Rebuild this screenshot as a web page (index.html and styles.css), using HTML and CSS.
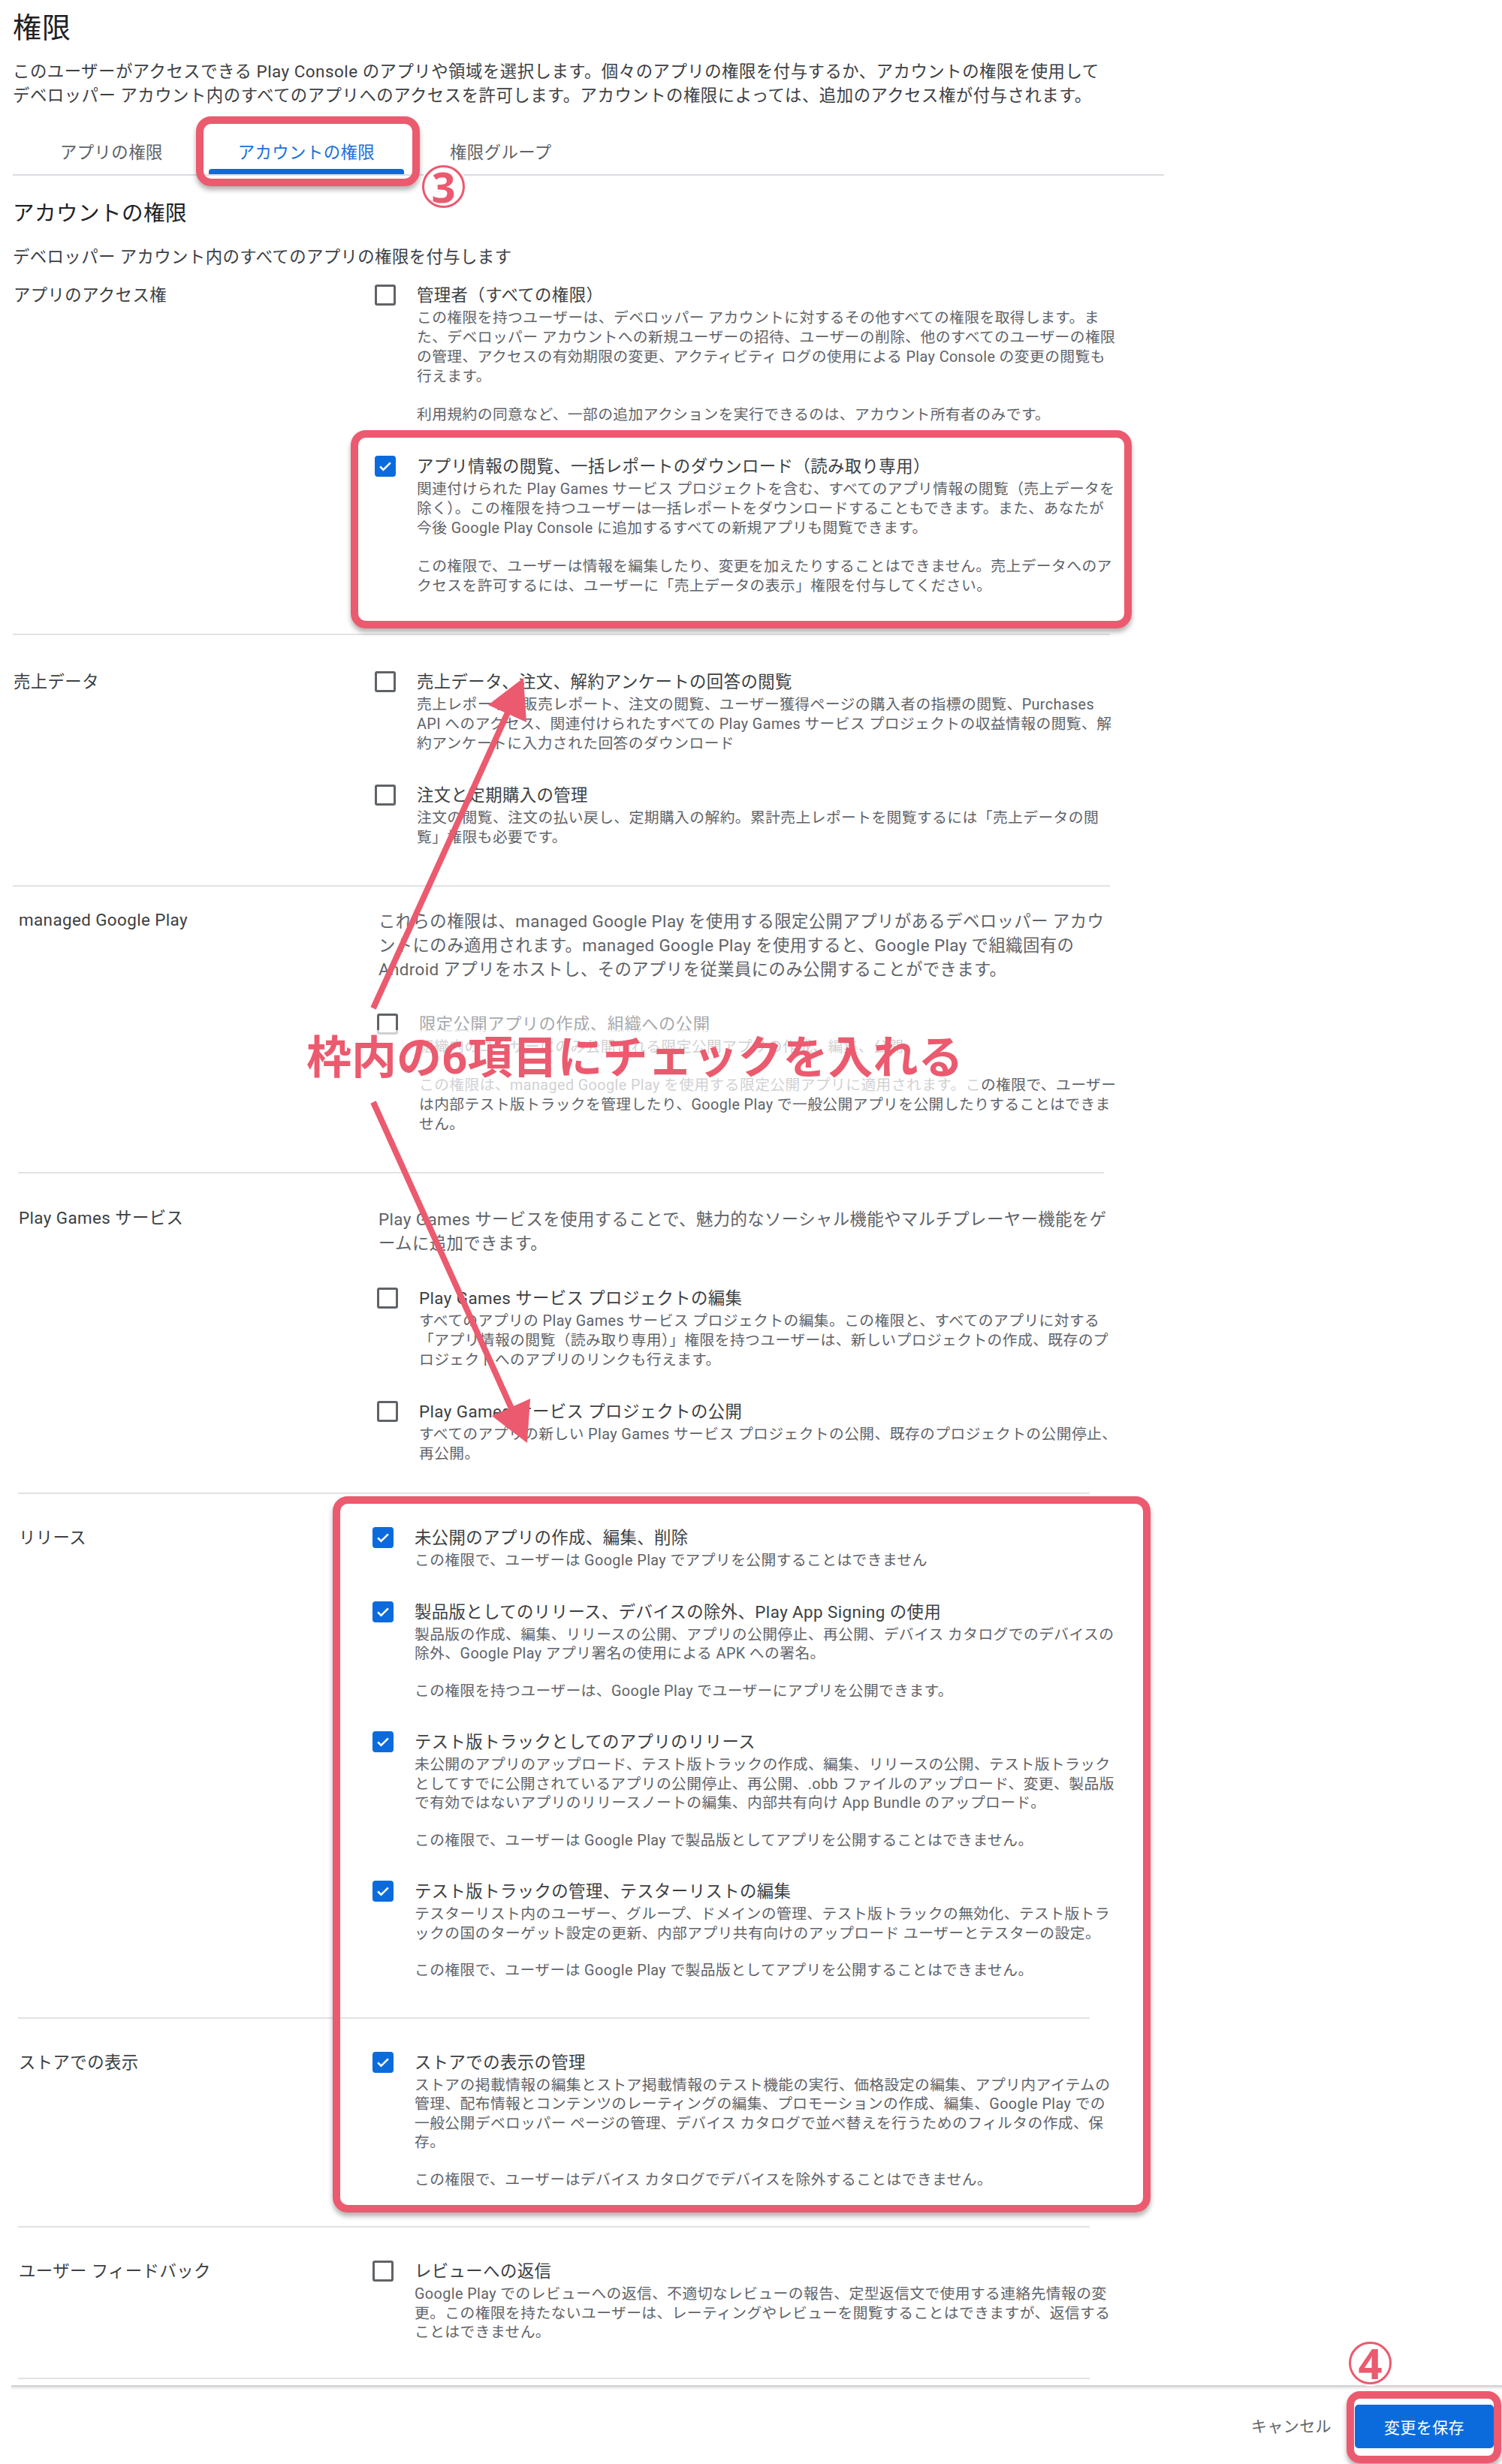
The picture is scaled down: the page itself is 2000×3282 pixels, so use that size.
FILE: index.html
```html
<!DOCTYPE html>
<html lang="ja">
<head>
<meta charset="utf-8">
<title>権限</title>
<link rel="stylesheet" href="styles.css">
</head>
<body>
<div class="page">
  <header class="head">
    <h1 class="page-title">権限</h1>
    <p class="page-desc">このユーザーがアクセスできる Play Console のアプリや領域を選択します。個々のアプリの権限を付与するか、アカウントの権限を使用して<br>デベロッパー アカウント内のすべてのアプリへのアクセスを許可します。アカウントの権限によっては、追加のアクセス権が付与されます。</p>
    <nav class="tabs">
      <div class="tab">アプリの権限</div>
      <div class="tab active">アカウントの権限</div>
      <div class="tab">権限グループ</div>
    </nav>
    <h2 class="sub-title">アカウントの権限</h2>
    <p class="sub-desc">デベロッパー アカウント内のすべてのアプリの権限を付与します</p>
  </header>

  <section class="sec sec-a sec-first">
    <div class="sec-label">アプリのアクセス権</div>
    <div class="sec-body">
      <div class="item">
        <span class="cb"></span>
        <div class="item-text">
          <div class="item-title">管理者（すべての権限）</div>
          <p class="desc">この権限を持つユーザーは、デベロッパー アカウントに対するその他すべての権限を取得します。ま<br>た、デベロッパー アカウントへの新規ユーザーの招待、ユーザーの削除、他のすべてのユーザーの権限<br>の管理、アクセスの有効期限の変更、アクティビティ ログの使用による Play Console の変更の閲覧も<br>行えます。</p>
          <p class="desc para">利用規約の同意など、一部の追加アクションを実行できるのは、アカウント所有者のみです。</p>
        </div>
      </div>
      <div class="item">
        <span class="cb on"><svg viewBox="0 0 24 24" width="22" height="22"><path d="M4.5 12.5l4.7 4.7L19.5 7" fill="none" stroke="#fff" stroke-width="2.8"/></svg></span>
        <div class="item-text">
          <div class="item-title">アプリ情報の閲覧、一括レポートのダウンロード（読み取り専用）</div>
          <p class="desc">関連付けられた Play Games サービス プロジェクトを含む、すべてのアプリ情報の閲覧（売上データを<br>除く）。この権限を持つユーザーは一括レポートをダウンロードすることもできます。また、あなたが<br>今後 Google Play Console に追加するすべての新規アプリも閲覧できます。</p>
          <p class="desc para">この権限で、ユーザーは情報を編集したり、変更を加えたりすることはできません。売上データへのア<br>クセスを許可するには、ユーザーに「売上データの表示」権限を付与してください。</p>
        </div>
      </div>
    </div>
  </section>

  <section class="sec sec-a">
    <div class="sec-label">売上データ</div>
    <div class="sec-body">
      <div class="item">
        <span class="cb"></span>
        <div class="item-text">
          <div class="item-title">売上データ、注文、解約アンケートの回答の閲覧</div>
          <p class="desc">売上レポート、販売レポート、注文の閲覧、ユーザー獲得ページの購入者の指標の閲覧、Purchases<br>API へのアクセス、関連付けられたすべての Play Games サービス プロジェクトの収益情報の閲覧、解<br>約アンケートに入力された回答のダウンロード</p>
        </div>
      </div>
      <div class="item">
        <span class="cb"></span>
        <div class="item-text">
          <div class="item-title">注文と定期購入の管理</div>
          <p class="desc">注文の閲覧、注文の払い戻し、定期購入の解約。累計売上レポートを閲覧するには「売上データの閲<br>覧」権限も必要です。</p>
        </div>
      </div>
    </div>
  </section>

  <section class="sec sec-b sec-managed">
    <div class="sec-label">managed Google Play</div>
    <div class="sec-body">
      <p class="intro">これらの権限は、managed Google Play を使用する限定公開アプリがあるデベロッパー アカウ<br>ントにのみ適用されます。managed Google Play を使用すると、Google Play で組織固有の<br>Android アプリをホストし、そのアプリを従業員にのみ公開することができます。</p>
      <div class="item">
        <span class="cb"></span>
        <div class="item-text">
          <div class="item-title disabled">限定公開アプリの作成、組織への公開</div>
          <p class="desc">組織内のユーザーにのみ公開される限定公開アプリの作成、編集、公開</p>
          <p class="desc para">この権限は、managed Google Play を使用する限定公開アプリに適用されます。この権限で、ユーザー<br>は内部テスト版トラックを管理したり、Google Play で一般公開アプリを公開したりすることはできま<br>せん。</p>
        </div>
      </div>
    </div>
  </section>

  <section class="sec sec-b sec-games">
    <div class="sec-label">Play Games サービス</div>
    <div class="sec-body">
      <p class="intro">Play Games サービスを使用することで、魅力的なソーシャル機能やマルチプレーヤー機能をゲ<br>ームに追加できます。</p>
      <div class="item">
        <span class="cb"></span>
        <div class="item-text">
          <div class="item-title">Play Games サービス プロジェクトの編集</div>
          <p class="desc">すべてのアプリの Play Games サービス プロジェクトの編集。この権限と、すべてのアプリに対する<br>「アプリ情報の閲覧（読み取り専用）」権限を持つユーザーは、新しいプロジェクトの作成、既存のプ<br>ロジェクトへのアプリのリンクも行えます。</p>
        </div>
      </div>
      <div class="item">
        <span class="cb"></span>
        <div class="item-text">
          <div class="item-title">Play Games サービス プロジェクトの公開</div>
          <p class="desc">すべてのアプリの新しい Play Games サービス プロジェクトの公開、既存のプロジェクトの公開停止、<br>再公開。</p>
        </div>
      </div>
    </div>
  </section>

  <section class="sec sec-c compact">
    <div class="sec-label">リリース</div>
    <div class="sec-body">
      <div class="item">
        <span class="cb on"><svg viewBox="0 0 24 24" width="22" height="22"><path d="M4.5 12.5l4.7 4.7L19.5 7" fill="none" stroke="#fff" stroke-width="2.8"/></svg></span>
        <div class="item-text">
          <div class="item-title">未公開のアプリの作成、編集、削除</div>
          <p class="desc">この権限で、ユーザーは Google Play でアプリを公開することはできません</p>
        </div>
      </div>
      <div class="item">
        <span class="cb on"><svg viewBox="0 0 24 24" width="22" height="22"><path d="M4.5 12.5l4.7 4.7L19.5 7" fill="none" stroke="#fff" stroke-width="2.8"/></svg></span>
        <div class="item-text">
          <div class="item-title">製品版としてのリリース、デバイスの除外、Play App Signing の使用</div>
          <p class="desc">製品版の作成、編集、リリースの公開、アプリの公開停止、再公開、デバイス カタログでのデバイスの<br>除外、Google Play アプリ署名の使用による APK への署名。</p>
          <p class="desc para">この権限を持つユーザーは、Google Play でユーザーにアプリを公開できます。</p>
        </div>
      </div>
      <div class="item">
        <span class="cb on"><svg viewBox="0 0 24 24" width="22" height="22"><path d="M4.5 12.5l4.7 4.7L19.5 7" fill="none" stroke="#fff" stroke-width="2.8"/></svg></span>
        <div class="item-text">
          <div class="item-title">テスト版トラックとしてのアプリのリリース</div>
          <p class="desc">未公開のアプリのアップロード、テスト版トラックの作成、編集、リリースの公開、テスト版トラック<br>としてすでに公開されているアプリの公開停止、再公開、.obb ファイルのアップロード、変更、製品版<br>で有効ではないアプリのリリースノートの編集、内部共有向け App Bundle のアップロード。</p>
          <p class="desc para">この権限で、ユーザーは Google Play で製品版としてアプリを公開することはできません。</p>
        </div>
      </div>
      <div class="item">
        <span class="cb on"><svg viewBox="0 0 24 24" width="22" height="22"><path d="M4.5 12.5l4.7 4.7L19.5 7" fill="none" stroke="#fff" stroke-width="2.8"/></svg></span>
        <div class="item-text">
          <div class="item-title">テスト版トラックの管理、テスターリストの編集</div>
          <p class="desc">テスターリスト内のユーザー、グループ、ドメインの管理、テスト版トラックの無効化、テスト版トラ<br>ックの国のターゲット設定の更新、内部アプリ共有向けのアップロード ユーザーとテスターの設定。</p>
          <p class="desc para">この権限で、ユーザーは Google Play で製品版としてアプリを公開することはできません。</p>
        </div>
      </div>
    </div>
  </section>

  <section class="sec sec-c compact">
    <div class="sec-label">ストアでの表示</div>
    <div class="sec-body">
      <div class="item">
        <span class="cb on"><svg viewBox="0 0 24 24" width="22" height="22"><path d="M4.5 12.5l4.7 4.7L19.5 7" fill="none" stroke="#fff" stroke-width="2.8"/></svg></span>
        <div class="item-text">
          <div class="item-title">ストアでの表示の管理</div>
          <p class="desc">ストアの掲載情報の編集とストア掲載情報のテスト機能の実行、価格設定の編集、アプリ内アイテムの<br>管理、配布情報とコンテンツのレーティングの編集、プロモーションの作成、編集、Google Play での<br>一般公開デベロッパー ページの管理、デバイス カタログで並べ替えを行うためのフィルタの作成、保<br>存。</p>
          <p class="desc para">この権限で、ユーザーはデバイス カタログでデバイスを除外することはできません。</p>
        </div>
      </div>
    </div>
  </section>

  <section class="sec sec-c compact sec-last">
    <div class="sec-label">ユーザー フィードバック</div>
    <div class="sec-body">
      <div class="item">
        <span class="cb"></span>
        <div class="item-text">
          <div class="item-title">レビューへの返信</div>
          <p class="desc">Google Play でのレビューへの返信、不適切なレビューの報告、定型返信文で使用する連絡先情報の変<br>更。この権限を持たないユーザーは、レーティングやレビューを閲覧することはできますが、返信する<br>ことはできません。</p>
        </div>
      </div>
    </div>
  </section>

  <footer class="footer">
    <button class="btn-cancel">キャンセル</button>
    <button class="btn-save">変更を保存</button>
  </footer>

  <div class="annot">
    <div class="hl hl-tab"></div>
    <div class="num num-3">3</div>
    <div class="hl hl-info"></div>
    <div class="band"></div>
    <div class="callout">枠内の6項目にチェックを入れる</div>
    <svg class="arrows" width="2000" height="3282" viewBox="0 0 2000 3282">
      <line x1="497" y1="1343" x2="677" y2="947" stroke="#eb5a6e" stroke-width="8"/>
      <polygon points="697,903 701,962 650,939" fill="#eb5a6e"/>
      <line x1="497" y1="1468" x2="682" y2="1878" stroke="#eb5a6e" stroke-width="8"/>
      <polygon points="702,1922 706,1863 655,1886" fill="#eb5a6e"/>
    </svg>
    <div class="hl hl-release"></div>
    <div class="num num-4">4</div>
    <div class="hl hl-save"></div>
  </div>
</div>
</body>
</html>
```

FILE: styles.css
```css
* { box-sizing: border-box; }

body {
  margin: 0;
  background: #fff;
  font-family: Roboto, "Noto Sans CJK JP", sans-serif;
  color: #3c4043;
}

p { margin: 0; }

.page {
  position: relative;
  width: 2000px;
  height: 3282px;
  overflow: hidden;
  padding-top: 13px;
}

/* ---------- header ---------- */
.head { padding-left: 17px; }

.page-title {
  margin: 0;
  font-size: 38px;
  line-height: 48px;
  font-weight: 400;
  letter-spacing: 1px;
  color: #202124;
}

.page-desc {
  margin-top: 18px;
  font-size: 22.4px;
  line-height: 32px;
  letter-spacing: 0.5px;
  color: #3c4043;
  white-space: nowrap;
}

.tabs {
  margin-top: 27px;
  display: flex;
  gap: 22px;
  padding-left: 24px;
  width: 1533px;
  border-bottom: 2px solid #dadce0;
}

.tab {
  position: relative;
  height: 62px;
  padding: 0 39px;
  display: flex;
  align-items: center;
  font-size: 22.4px;
  letter-spacing: 0.4px;
  color: #5f6368;
}

.tab.active { color: #1a6fdc; }

.tab.active::after {
  content: "";
  position: absolute;
  left: 0;
  right: 0;
  bottom: 0;
  height: 7px;
  background: #0b6bdc;
  border-radius: 4px 4px 0 0;
}

.sub-title {
  margin: 33px 0 0;
  font-size: 28.5px;
  line-height: 36px;
  font-weight: 400;
  letter-spacing: 0.5px;
  color: #202124;
}

.sub-desc {
  margin-top: 25px;
  font-size: 22.4px;
  line-height: 28px;
  letter-spacing: 0.4px;
  color: #3c4043;
}

/* ---------- sections ---------- */
.sec {
  display: grid;
  padding: 48px 0 50px;
  border-bottom: 2px solid #e2e2e6;
}

.sec-a { margin-left: 17px; width: 1461px; grid-template-columns: 482px 1fr; }
.sec-b { margin-left: 24px; width: 1446px; grid-template-columns: 478px 1fr; }
.sec-c { margin-left: 24px; width: 1427px; grid-template-columns: 472px 1fr; }

.sec-first { padding-top: 23px; }
.sec-managed { padding-top: 30px; }
.sec-games { width: 1427px; padding-top: 45px; padding-bottom: 38px; }

.compact { padding-top: 44px; padding-bottom: 49px; }
.compact .desc { line-height: 25.5px; }
.sec-last { padding-bottom: 47px; }

.sec-label {
  padding-left: 1px;
  font-size: 22.4px;
  line-height: 28px;
  letter-spacing: 0.4px;
  color: #3c4043;
  white-space: nowrap;
}

.sec-body {
  display: flex;
  flex-direction: column;
}

.intro {
  margin: 0 0 43px 2px;
  font-size: 22.4px;
  line-height: 32px;
  letter-spacing: 0.4px;
  color: #5f6368;
  white-space: nowrap;
}

.item {
  display: flex;
  gap: 28px;
}

.item + .item { margin-top: 41px; }

.cb {
  flex: none;
  width: 28px;
  height: 28px;
  border: 3px solid #5f6368;
  border-radius: 3px;
}

.cb.on {
  display: flex;
  align-items: center;
  justify-content: center;
  background: #0b6bdc;
  border-color: #0b6bdc;
  border-radius: 4px;
}

.item-title {
  font-size: 22.4px;
  line-height: 28px;
  letter-spacing: 0.4px;
  color: #3c4043;
  white-space: nowrap;
}

.item-title.disabled { color: #a6a9ad; }

.desc {
  margin-top: 4px;
  font-size: 19.8px;
  line-height: 26px;
  letter-spacing: 0.4px;
  color: #5f6368;
  white-space: nowrap;
}

.desc.para { margin-top: 25px; }
.compact .desc.para { margin-top: 24px; }

/* ---------- footer ---------- */
.footer {
  margin: 8px 0 0 15px;
  height: 105px;
  border-top: 2px solid #d2d2d2;
  box-shadow: inset 0 4px 4px -3px rgba(0, 0, 0, 0.18);
  display: flex;
  justify-content: flex-end;
  align-items: flex-start;
  gap: 31px;
  padding: 24px 11px 0 0;
}

.btn-cancel {
  height: 58px;
  padding: 0;
  border: 0;
  background: none;
  font-family: Roboto, "Noto Sans CJK JP", sans-serif;
  font-size: 21px;
  line-height: 58px;
  letter-spacing: 0.4px;
  color: #5f6368;
}

.btn-save {
  width: 185px;
  height: 58px;
  border: 0;
  border-radius: 5px;
  background: #0b6bdc;
  color: #fff;
  font-family: Roboto, "Noto Sans CJK JP", sans-serif;
  font-size: 21px;
  letter-spacing: 0.4px;
}

/* ---------- annotations (overlay) ---------- */
.annot {
  position: absolute;
  left: 0;
  top: 0;
  width: 2000px;
  height: 3282px;
  pointer-events: none;
}

.hl {
  position: absolute;
  border: 10px solid #eb5a6e;
  border-radius: 20px;
  box-shadow: 0 5px 6px rgba(0, 0, 0, 0.3);
}

.hl-tab { left: 261px; top: 155px; width: 298px; height: 93px; }
.hl-info { left: 467px; top: 573px; width: 1040px; height: 264px; }
.hl-release { left: 443px; top: 1993px; width: 1089px; height: 954px; }
.hl-save { left: 1793px; top: 3185px; width: 206px; height: 96px; border-radius: 18px; }

.num {
  position: absolute;
  width: 57px;
  height: 57px;
  border: 3px solid #eb5a6e;
  border-radius: 50%;
  background: #fff;
  box-shadow: 0 0 0 2px #fff;
  color: #eb5a6e;
  font-family: "Noto Sans", Roboto, sans-serif;
  font-weight: 700;
  font-size: 56px;
  line-height: 51px;
  text-align: center;
}

.num-3 { left: 562px; top: 220px; }
.num-4 { left: 1796px; top: 3119px; }

.band {
  position: absolute;
  left: 398px;
  top: 1372px;
  width: 910px;
  height: 88px;
  background: rgba(255, 255, 255, 0.7);
}

.callout {
  position: absolute;
  left: 408px;
  top: 1380px;
  font-family: Roboto, "Noto Sans CJK JP", sans-serif;
  font-weight: 700;
  font-size: 60px;
  line-height: 60px;
  color: #eb5a6e;
  white-space: nowrap;
}

.arrows {
  position: absolute;
  left: 0;
  top: 0;
}
```
